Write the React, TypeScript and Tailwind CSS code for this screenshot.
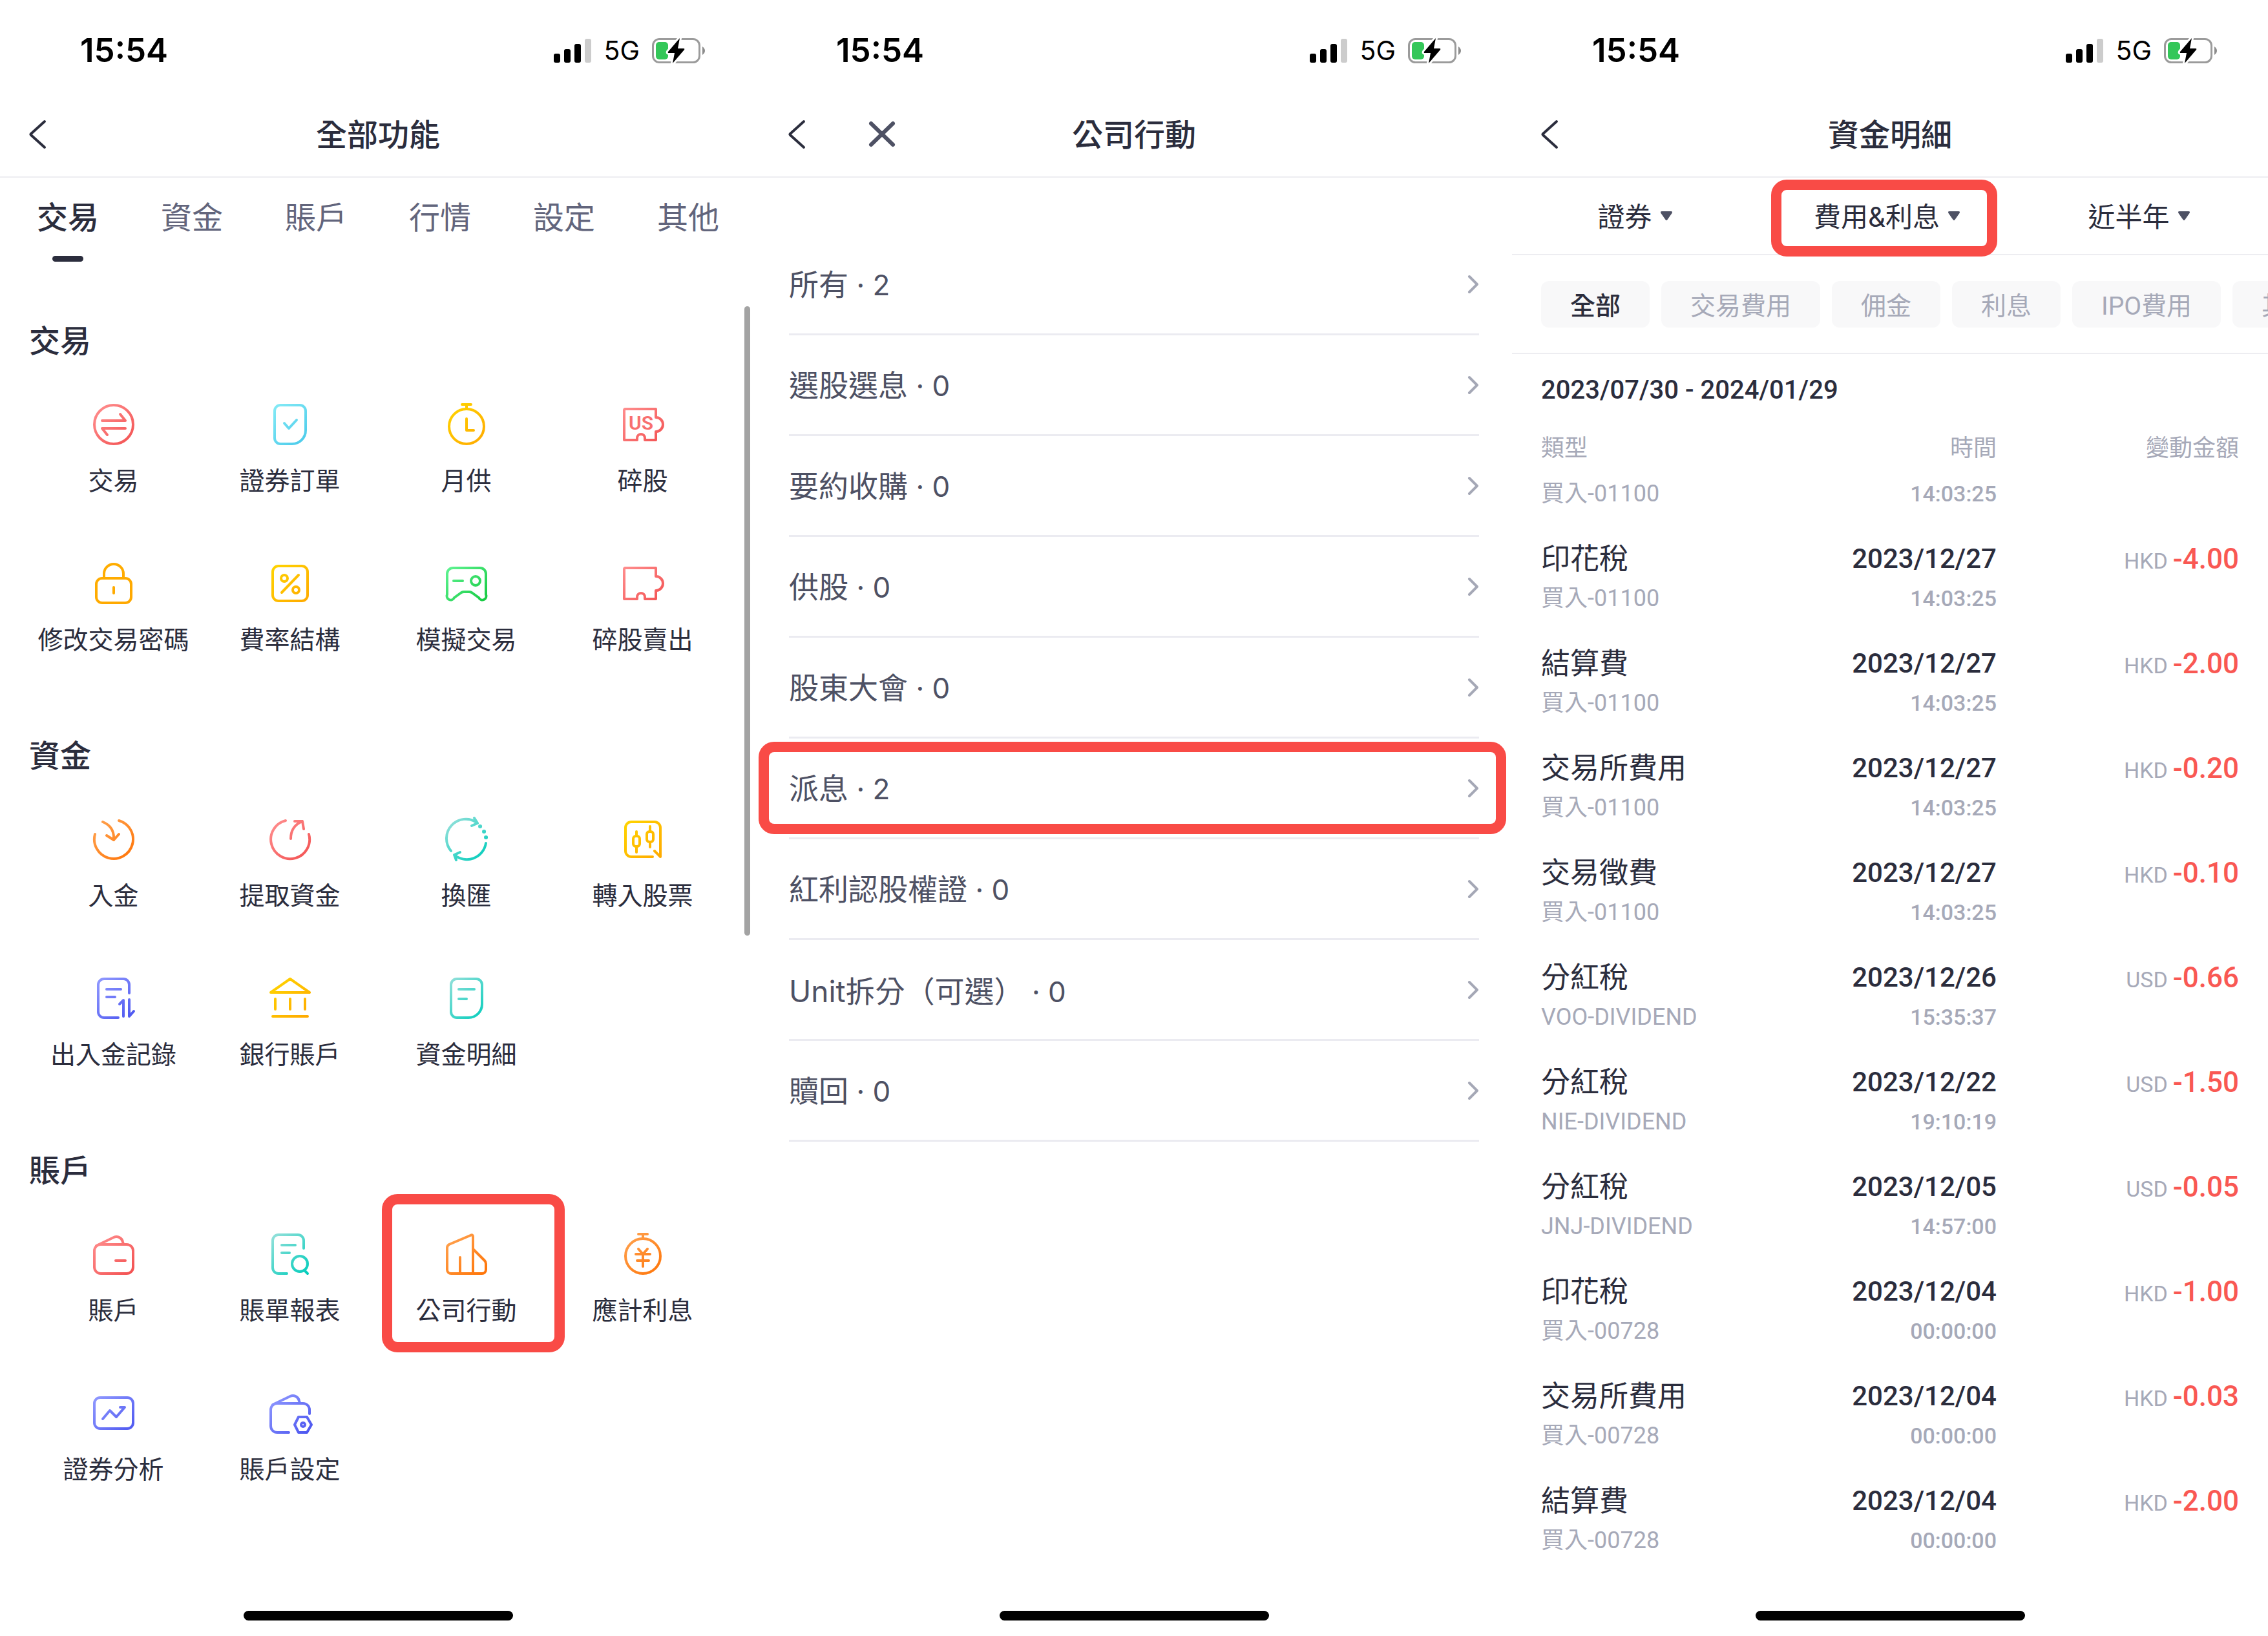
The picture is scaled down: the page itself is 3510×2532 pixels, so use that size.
import { FC, ReactNode } from "react";

type Tone = "red" | "cyan" | "yellow" | "amber" | "orange" | "green" | "teal" | "purple";

const tones: Record<Tone, [string, string]> = {
  red: ["#ff8f8f", "#f35252"],
  cyan: ["#86ebf6", "#48c9ea"],
  yellow: ["#ffd500", "#ffa900"],
  amber: ["#ffae00", "#ffa800"],
  orange: ["#ffa351", "#ff7508"],
  green: ["#62f595", "#14c93f"],
  teal: ["#94e0da", "#04cdbc"],
  purple: ["#929bff", "#4d57f0"],
};

const puzzle = "M9 12H56V25a11 11 0 0 1 0 22V60H39V57a6 6 0 0 0-12 0V60H7V14q0-2 2-2Z";
const sheet = "M21 6H51a9 9 0 0 1 9 9V45a21 21 0 0 1-21 21H21a9 9 0 0 1-9-9V15a9 9 0 0 1 9-9Z";
const flap = "M9 23L36 10a10 10 0 0 1 14 7l1 4";

type Feature = {
  label: string;
  tone: Tone;
  drawing: ReactNode;
  highlighted?: boolean;
};

type FeatureGroup = {
  title: string;
  features: Feature[];
};

const groups: FeatureGroup[] = [
  {
    title: "交易",
    features: [
      {
        label: "交易",
        tone: "red",
        drawing: (
          <>
            <circle cx="36" cy="36" r="30" />
            <path d="M18 30H54L46 20M54 42H18L26 52" />
          </>
        ),
      },
      {
        label: "證券訂單",
        tone: "cyan",
        drawing: (
          <>
            <path d={sheet} />
            <path d="M27 34l7 8 12-13" />
          </>
        ),
      },
      {
        label: "月供",
        tone: "yellow",
        drawing: (
          <>
            <circle cx="36" cy="39" r="27" />
            <path d="M29 5H43M36 5V12M36 27V45H47" />
          </>
        ),
      },
      {
        label: "碎股",
        tone: "red",
        drawing: (
          <>
            <path d={puzzle} />
            <text
              x="33"
              y="44"
              textAnchor="middle"
              stroke="none"
              fill="#f86f6f"
              className="font-['Roboto',sans-serif] text-[30px] font-semibold"
            >
              US
            </text>
          </>
        ),
      },
      {
        label: "修改交易密碼",
        tone: "amber",
        drawing: (
          <>
            <rect x="9" y="28" width="54" height="38" rx="9" />
            <path d="M21 28V21a15 15 0 0 1 30 0V28M36 42V51" />
          </>
        ),
      },
      {
        label: "費率結構",
        tone: "yellow",
        drawing: (
          <>
            <rect x="9" y="9" width="54" height="54" rx="9" />
            <path d="M49 23L23 50" />
            <circle cx="27" cy="28" r="5" />
            <circle cx="45" cy="46" r="5" />
          </>
        ),
      },
      {
        label: "模擬交易",
        tone: "green",
        drawing: (
          <>
            <path d="M15 12H57a9 9 0 0 1 9 9V53a6 6 0 0 1-11 5L44 50q-2-1-4-1H32q-2 0-4 1L17 58A6 6 0 0 1 6 53V21a9 9 0 0 1 9-9Z" />
            <path d="M16 32H30" />
            <circle cx="50" cy="32" r="7" />
          </>
        ),
      },
      { label: "碎股賣出", tone: "red", drawing: <path d={puzzle} /> },
    ],
  },
  {
    title: "資金",
    features: [
      {
        label: "入金",
        tone: "orange",
        drawing: <path d="M44 7A30 30 0 1 1 7 28M19 9C31 14 37 24 36 37M25 30L36 37 44 28" />,
      },
      {
        label: "提取資金",
        tone: "red",
        drawing: <path d="M29 7A30 30 0 1 0 65 28M37 35C37 22 43 13 55 8M43 8H55L57 20" />,
      },
      {
        label: "換匯",
        tone: "teal",
        drawing: (
          <>
            <path d="M12 54A30 30 0 0 1 52 10M48 3L53 11 44 15" />
            <path d="M66 42A30 30 0 0 1 17 60M26 56L17 60 20 68" />
            <path d="M57 16h.1M63 24h.1M66 33h.1" strokeWidth="6" />
          </>
        ),
      },
      {
        label: "轉入股票",
        tone: "yellow",
        drawing: (
          <>
            <path d="M51 63H18a9 9 0 0 1-9-9V18a9 9 0 0 1 9-9H54a9 9 0 0 1 9 9V63L54 54" />
            <rect x="21" y="31" width="10" height="16" rx="4" />
            <rect x="42" y="24" width="10" height="16" rx="4" />
            <path d="M26 24V31M26 47V56M47 16V24M47 40V48" />
          </>
        ),
      },
      {
        label: "出入金記錄",
        tone: "purple",
        drawing: (
          <>
            <path d="M60 28V15a9 9 0 0 0-9-9H21a9 9 0 0 0-9 9V57a9 9 0 0 0 9 9H43" />
            <path d="M25 22H47M25 34H38M51 64V39L45 45M60 38V64L67 56" />
          </>
        ),
      },
      {
        label: "銀行賬戶",
        tone: "yellow",
        drawing: <path d="M36 6L66 27H6ZM13 37V53M36 37V53M59 37V53M9 64H63" />,
      },
      {
        label: "資金明細",
        tone: "teal",
        drawing: (
          <>
            <path d={sheet} />
            <path d="M24 22H48M24 37H36" />
          </>
        ),
      },
    ],
  },
  {
    title: "賬戶",
    features: [
      {
        label: "賬戶",
        tone: "red",
        drawing: (
          <>
            <rect x="6" y="21" width="60" height="45" rx="10" />
            <path d={flap} />
            <path d="M39 46H54" />
          </>
        ),
      },
      {
        label: "賬單報表",
        tone: "teal",
        drawing: (
          <>
            <path d="M57 27V15a9 9 0 0 0-9-9H18a9 9 0 0 0-9 9V57a9 9 0 0 0 9 9H31" />
            <path d="M23 22H44M23 34H35M59 62L63 66" />
            <circle cx="51" cy="51" r="12" />
          </>
        ),
      },
      {
        label: "公司行動",
        tone: "orange",
        highlighted: true,
        drawing: (
          <>
            <path d="M46 28L64 46q2 2 2 5V60a6 6 0 0 1-6 6H12a6 6 0 0 1-6-6V26q0-3 3-5L42 7q4-2 4 2V66" />
            <path d="M26 41V66" />
          </>
        ),
      },
      {
        label: "應計利息",
        tone: "orange",
        drawing: (
          <>
            <circle cx="36" cy="39" r="27" />
            <path d="M29 5H43M36 5V12M29 28L36 36 43 28M25 36H47M27 46H45M36 36V55" />
          </>
        ),
      },
      {
        label: "證券分析",
        tone: "purple",
        drawing: (
          <>
            <rect x="6" y="12" width="60" height="48" rx="9" />
            <path d="M19 45L30 32 40 42 53 27H46" />
          </>
        ),
      },
      {
        label: "賬戶設定",
        tone: "purple",
        drawing: (
          <>
            <path d="M66 37V31a10 10 0 0 0-10-10H16a10 10 0 0 0-10 10V56a10 10 0 0 0 10 10H34" />
            <path d={flap} />
            <path d="M43 54L49 42H62L69 54 62 66H49Z" />
            <circle cx="56" cy="54" r="3" />
          </>
        ),
      },
    ],
  },
];

const tabs = ["交易", "資金", "賬戶", "行情", "設定", "其他"];

const actions = [
  { name: "所有", count: 2 },
  { name: "選股選息", count: 0 },
  { name: "要約收購", count: 0 },
  { name: "供股", count: 0 },
  { name: "股東大會", count: 0 },
  { name: "派息", count: 2, highlighted: true },
  { name: "紅利認股權證", count: 0 },
  { name: "Unit拆分（可選）", count: 0 },
  { name: "贖回", count: 0 },
];

const filters = [
  { id: "market", label: "證券" },
  { id: "kind", label: "費用&利息", highlighted: true },
  { id: "period", label: "近半年" },
];

const chips = ["全部", "交易費用", "佣金", "利息", "IPO費用", "其他"];

const records = [
  { type: "印花稅", detail: "買入-01100", date: "2023/12/27", time: "14:03:25", currency: "HKD", amount: "-4.00" },
  { type: "結算費", detail: "買入-01100", date: "2023/12/27", time: "14:03:25", currency: "HKD", amount: "-2.00" },
  { type: "交易所費用", detail: "買入-01100", date: "2023/12/27", time: "14:03:25", currency: "HKD", amount: "-0.20" },
  { type: "交易徵費", detail: "買入-01100", date: "2023/12/27", time: "14:03:25", currency: "HKD", amount: "-0.10" },
  { type: "分紅稅", detail: "VOO-DIVIDEND", date: "2023/12/26", time: "15:35:37", currency: "USD", amount: "-0.66" },
  { type: "分紅稅", detail: "NIE-DIVIDEND", date: "2023/12/22", time: "19:10:19", currency: "USD", amount: "-1.50" },
  { type: "分紅稅", detail: "JNJ-DIVIDEND", date: "2023/12/05", time: "14:57:00", currency: "USD", amount: "-0.05" },
  { type: "印花稅", detail: "買入-00728", date: "2023/12/04", time: "00:00:00", currency: "HKD", amount: "-1.00" },
  { type: "交易所費用", detail: "買入-00728", date: "2023/12/04", time: "00:00:00", currency: "HKD", amount: "-0.03" },
  { type: "結算費", detail: "買入-00728", date: "2023/12/04", time: "00:00:00", currency: "HKD", amount: "-2.00" },
];

const StatusBar: FC = () => (
  <div className="flex h-[145px] items-center justify-between pt-3 pr-[79px] pl-[124px] text-black">
    <span className="text-[51px] font-semibold">15:54</span>
    <div className="flex items-center gap-[19px]">
      <svg className="h-[37px] w-[58px]" viewBox="0 0 58 37">
        <rect x="0" y="23" width="10" height="14" rx="3" />
        <rect x="16" y="16" width="10" height="21" rx="3" />
        <rect x="32" y="8" width="10" height="29" rx="3" />
        <rect x="48" y="0" width="10" height="37" rx="3" fill="#cccccc" />
      </svg>
      <span className="text-[41px]">5G</span>
      <svg className="h-[41px] w-[82px]" viewBox="0 -1 82 41">
        <rect x="1.5" y="1.5" width="72" height="36" rx="10" fill="none" stroke="#9b9b9b" strokeWidth="3" />
        <path d="M78 13q4 3 4 6.500t-4 6.500Z" fill="#8c8c8c" />
        <rect x="6" y="6" width="19" height="27" rx="5" fill="#34c759" />
        <path
          d="M43 0L25 21q-1 2 1 2h9l-3 16L50 18q1-2-1-2h-9Z"
          stroke="#ffffff"
          strokeWidth="6"
          strokeLinejoin="round"
          paintOrder="stroke"
        />
      </svg>
    </div>
  </div>
);

type PhoneProps = {
  title: string;
  closable?: boolean;
  children: ReactNode;
};

const Phone: FC<PhoneProps> = ({ title, closable, children }) => (
  <section className="relative flex min-w-0 flex-col overflow-hidden bg-white">
    <StatusBar />
    <header className="grid h-[130px] shrink-0 grid-cols-[1fr_auto_1fr] items-center border-b-2 border-[#ededf1]">
      <div className={closable ? "flex items-center gap-[93px] pl-12" : "flex items-center pl-[43px]"}>
        <button type="button" aria-label="返回">
          <svg className="h-12 w-[30px]" viewBox="0 0 30 48" fill="none" stroke="#2b2d3d" strokeWidth="4" strokeLinecap="round" strokeLinejoin="round">
            <path d="M26 3L5 22q-1 1 0 2L26 43" />
          </svg>
        </button>
        {closable && (
          <button type="button" aria-label="關閉">
            <svg className="h-12 w-12" viewBox="0 0 48 48" stroke="#4e5164" strokeWidth="6" strokeLinecap="round">
              <path d="M7 6L41 39M41 6L7 39" />
            </svg>
          </button>
        )}
      </div>
      <h1 className="text-[48px] leading-[60px] font-medium">{title}</h1>
    </header>
    {children}
    <div className="mx-auto mt-auto mb-6 h-[15px] w-[417px] shrink-0 rounded-full bg-black" />
  </section>
);

const FeatureButton: FC<{ feature: Feature }> = ({ feature }) => {
  const id = `tone-${feature.label}`;
  const [from, to] = tones[feature.tone];

  return (
    <button type="button" className="relative flex h-[246px] flex-col items-center gap-6 pt-[18px]">
      <svg
        className="size-[72px]"
        viewBox="0 0 72 72"
        fill="none"
        stroke={`url(#${id})`}
        strokeWidth="4"
        strokeLinecap="round"
        strokeLinejoin="round"
      >
        <defs>
          <linearGradient id={id} gradientUnits="userSpaceOnUse" x1="8" y1="6" x2="64" y2="66">
            <stop stopColor={from} />
            <stop offset="1" stopColor={to} />
          </linearGradient>
        </defs>
        {feature.drawing}
      </svg>
      <span className="text-[39px] leading-[54px] whitespace-nowrap">{feature.label}</span>
      {feature.highlighted && (
        <span className="absolute -top-[39px] -right-4 left-[6px] h-[245px] rounded-3xl border-[16px] border-[#f94b46]" />
      )}
    </button>
  );
};

const AllFeatures: FC = () => (
  <Phone title="全部功能">
    <nav className="flex h-[178px] gap-24 px-[57px] pt-8 text-[48px] leading-[60px] text-[#62657c]">
      {tabs.map((tab, index) => (
        <button key={tab} type="button" className="flex flex-col items-center gap-[29px] whitespace-nowrap">
          <span className={index === 0 ? "font-medium text-[#2b2d3d]" : ""}>{tab}</span>
          {index === 0 && <span className="h-[9px] w-12 rounded-full bg-[#2b2d3d]" />}
        </button>
      ))}
    </nav>
    <div className="relative">
      {groups.map((group) => (
        <div key={group.title}>
          <h2 className="px-[45px] text-[48px] leading-[150px] font-medium">{group.title}</h2>
          <div className="grid grid-cols-4 px-[39px]">
            {group.features.map((feature) => (
              <FeatureButton key={feature.label} feature={feature} />
            ))}
          </div>
        </div>
      ))}
      <div className="absolute top-[21px] right-[9px] h-[974px] w-[9px] rounded-full bg-[#a3a3a3]" />
    </div>
  </Phone>
);

const CompanyActions: FC = () => (
  <Phone title="公司行動" closable>
    <ul className="px-[51px] pt-[88px]">
      {actions.map((action) => (
        <li key={action.name} className="relative border-b-[3px] border-[#ebebf1]">
          <button type="button" className="flex h-[153px] w-full items-center justify-between text-[46px] text-[#4e5164]">
            <span className="pt-0.5">
              {action.name.split(/([（）])/).map((part, index) =>
                /[（）]/.test(part) ? (
                  <span key={index} className="font-['Noto_Sans_CJK_SC',sans-serif]">{part}</span>
                ) : (
                  part
                )
              )}
              <span className="text-[44px]">{` · ${action.count}`}</span>
            </span>
            <svg className="h-9 w-5" viewBox="0 0 20 36" fill="none" stroke="#a5a8b6" strokeWidth="4" strokeLinecap="round" strokeLinejoin="round">
              <path d="M5 6L17 18 5 30" />
            </svg>
          </button>
          {action.highlighted && (
            <span className="pointer-events-none absolute top-[5px] -right-[42px] -left-[47px] h-[143px] rounded-3xl border-[16px] border-[#f94b46]" />
          )}
        </li>
      ))}
    </ul>
  </Phone>
);

const FundDetails: FC = () => (
  <Phone title="資金明細">
    <div className="grid h-[120px] shrink-0 grid-cols-3 border-b-2 border-[#ededf1]">
      {filters.map((filter) => (
        <div key={filter.id} className="relative flex items-center justify-center gap-[13px] pr-[10px]">
          <select
            id={filter.id}
            aria-label={filter.label}
            className="field-sizing-content appearance-none bg-transparent pt-0.5 text-[42px]"
          >
            <option>{filter.label}</option>
          </select>
          <svg className="pointer-events-none h-[14px] w-[18px]" viewBox="0 0 18 14" fill="#4e5164">
            <path d="M2 0H16q3 0 1.500 3L10.500 13q-1.500 2-3 0L.5 3Q-1 0 2 0Z" />
          </svg>
          {filter.highlighted && (
            <span className="pointer-events-none absolute top-[3px] right-[29px] left-[11px] h-[119px] rounded-3xl border-[16px] border-[#f94b46]" />
          )}
        </div>
      ))}
    </div>
    <div className="flex h-[153px] shrink-0 gap-[18px] overflow-hidden border-b-2 border-[#ededf1] pt-10 pl-[45px] font-['Roboto','Noto_Sans_CJK_TC',sans-serif]">
      {chips.map((chip, index) => (
        <button
          key={chip}
          type="button"
          className={
            index === 0
              ? "h-[72px] shrink-0 rounded-xl bg-[#f8f8f9] px-[45px] pt-1.5 text-[39px] font-medium"
              : "h-[72px] shrink-0 rounded-xl bg-[#f8f8f9] px-[45px] pt-1.5 text-[39px] text-[#a6a9b8]"
          }
        >
          {chip}
        </button>
      ))}
    </div>
    <h2 className="px-[45px] pt-1.5 font-['Roboto',sans-serif] text-[40px] leading-[99px] font-medium">
      2023/07/30 - 2024/01/29
    </h2>
    <div className="px-[45px]">
      <table className="w-full table-fixed text-right font-['Roboto','Noto_Sans_CJK_TC',sans-serif]">
        <colgroup>
          <col />
          <col className="w-[345px]" />
          <col className="w-[375px]" />
        </colgroup>
        <thead className="font-['Inter','Noto_Sans_CJK_TC',sans-serif]">
          <tr className="h-20 text-[36px] text-[#a6a9b8]">
            <th className="p-0 text-left font-normal">類型</th>
            <th className="p-0 font-normal">時間</th>
            <th className="p-0 font-normal">變動金額</th>
          </tr>
        </thead>
        <tbody className="align-top">
          {/* row scrolled halfway under the column titles */}
          <tr className="h-[102px] leading-[62px] text-[#a6a9b8]">
            <td className="p-0 text-left text-[36px]">買入-01100</td>
            <td className="p-0 text-[34px] font-medium">14:03:25</td>
            <td />
          </tr>
          {records.map((record, index) => (
            <tr key={index} className="h-[162px]">
              <td className="p-0 text-left">
                <div className="font-['Inter','Noto_Sans_CJK_TC',sans-serif] text-[45px] leading-[60px]">{record.type}</div>
                <div className="text-[36px] leading-[62px] text-[#a6a9b8]">{record.detail}</div>
              </td>
              <td className="p-0 font-medium">
                <div className="text-[42px] leading-[60px]">{record.date}</div>
                <div className="text-[34px] leading-[62px] text-[#a6a9b8]">{record.time}</div>
              </td>
              <td className="p-0 leading-[60px]">
                <span className="mr-2 text-[34px] text-[#a6a9b8]">{record.currency}</span>
                <span className="text-[44px] font-medium text-[#f95853]">{record.amount}</span>
              </td>
            </tr>
          ))}
        </tbody>
      </table>
    </div>
  </Phone>
);

const App: FC = () => {
  return (
    <main className="grid min-h-screen grid-cols-3 bg-white font-['Inter','Noto_Sans_CJK_TC',sans-serif] text-[#2b2d3d]">
      <AllFeatures />
      <CompanyActions />
      <FundDetails />
    </main>
  );
};

export default App;
